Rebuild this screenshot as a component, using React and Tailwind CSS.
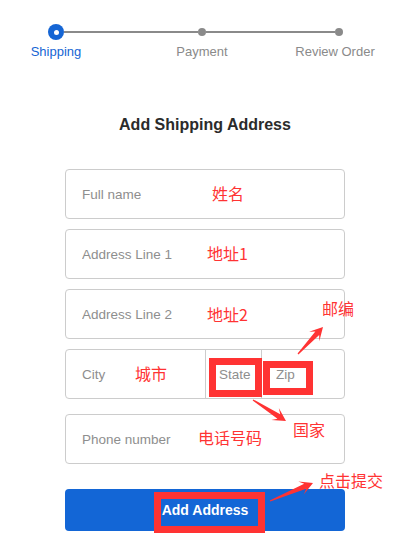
import { useState } from 'react'

const font = { fontFamily: '"Liberation Sans", Arial, sans-serif' }

function arrowPoints(x1, y1, x2, y2) {
  const len = Math.hypot(x2 - x1, y2 - y1)
  const dx = (x2 - x1) / len
  const dy = (y2 - y1) / len
  const nx = -dy
  const ny = dx
  const head = 13
  const neck = head * 0.65
  const nX = x2 - dx * neck
  const nY = y2 - dy * neck
  const bX = x2 - dx * head
  const bY = y2 - dy * head
  const pts = [
    [x1 + nx * 0.6, y1 + ny * 0.6],
    [nX + nx * 2.6, nY + ny * 2.6],
    [bX + nx * 7, bY + ny * 7],
    [x2, y2],
    [bX - nx * 7, bY - ny * 7],
    [nX - nx * 2.6, nY - ny * 2.6],
    [x1 - nx * 0.6, y1 - ny * 0.6],
  ]
  return pts.map((p) => p.join(',')).join(' ')
}

function Note({ left, top, children }) {
  return (
    <div
      className="absolute text-[16px] leading-none text-[#ff3333] whitespace-nowrap"
      style={{ left, top, fontFamily: '"Noto Sans CJK SC", "Liberation Sans", sans-serif' }}
    >
      {children}
    </div>
  )
}

export default function App() {
  const [form, setForm] = useState({ name: '', line1: '', line2: '', city: '', state: '', zip: '', phone: '' })
  const set = (k) => (e) => setForm({ ...form, [k]: e.target.value })

  const inputCls =
    'w-full h-full bg-transparent outline-none text-[13.5px] text-[#333] placeholder:text-[#8e8e8e]'

  return (
    <div className="relative w-[419px] h-[560px] bg-white overflow-hidden" style={font}>
      {/* Stepper */}
      <div className="pt-[24px]">
        <div className="ml-[48px] w-[295px] flex items-center">
          <div className="w-4 h-4 rounded-full bg-[#1565d4] flex items-center justify-center shrink-0">
            <div className="w-[5px] h-[5px] rounded-full bg-white" />
          </div>
          <div className="w-[134px] h-[2px] bg-[#8a8a8a]" />
          <div className="w-2 h-2 rounded-full bg-[#8a8a8a] shrink-0" />
          <div className="flex-1 h-[2px] bg-[#8a8a8a]" />
          <div className="w-2 h-2 rounded-full bg-[#8a8a8a] shrink-0" />
        </div>
        <div className="flex mt-[4px] text-[13px] leading-4">
          <div className="ml-[16px] w-[80px] text-center text-[#1565d4]">Shipping</div>
          <div className="ml-[66px] w-[80px] text-center text-[#8a8a8a]">Payment</div>
          <div className="ml-[48px] w-[90px] text-center text-[#8a8a8a]">Review Order</div>
        </div>
      </div>

      {/* Form */}
      <div className="ml-[65px] w-[280px]">
        <h1 className="mt-[55px] text-center text-[16px] leading-5 font-bold text-[#2b2b2b]">
          Add Shipping Address
        </h1>

        <div className="mt-[34px] flex flex-col gap-[10px]">
          <div className="h-[50px] border border-[#cccccc] rounded">
            <input className={inputCls + ' px-4'} placeholder="Full name" value={form.name} onChange={set('name')} />
          </div>
          <div className="h-[50px] border border-[#cccccc] rounded">
            <input className={inputCls + ' px-4'} placeholder="Address Line 1" value={form.line1} onChange={set('line1')} />
          </div>
          <div className="h-[50px] border border-[#cccccc] rounded">
            <input className={inputCls + ' px-4'} placeholder="Address Line 2" value={form.line2} onChange={set('line2')} />
          </div>
          <div className="h-[50px] border border-[#cccccc] rounded flex">
            <div className="w-[140px] border-r border-[#cccccc]">
              <input className={inputCls + ' px-4'} placeholder="City" value={form.city} onChange={set('city')} />
            </div>
            <div className="w-[56px] border-r border-[#cccccc]">
              <input className={inputCls + ' pl-[13px] pr-0'} placeholder="State" value={form.state} onChange={set('state')} />
            </div>
            <div className="flex-1">
              <input className={inputCls + ' pl-[14px] pr-2'} placeholder="Zip" value={form.zip} onChange={set('zip')} />
            </div>
          </div>
        </div>

        <div className="mt-[15px] h-[50px] border border-[#cccccc] rounded">
          <input className={inputCls + ' px-4'} placeholder="Phone number" value={form.phone} onChange={set('phone')} />
        </div>

        <button className="mt-[25px] w-full h-[42px] rounded bg-[#1366d6] text-white text-[14px] font-bold">
          Add Address
        </button>
      </div>

      {/* Annotations */}
      <Note left={212} top={185}>姓名</Note>
      <Note left={207} top={245}>地址1</Note>
      <Note left={207} top={306}>地址2</Note>
      <Note left={322} top={300}>邮编</Note>
      <Note left={135} top={365}>城市</Note>
      <Note left={293} top={421}>国家</Note>
      <Note left={198} top={429}>电话号码</Note>
      <Note left={319} top={472}>点击提交</Note>

      <div className="absolute left-[209px] top-[358px] w-[53px] h-[39px] border-[7px] border-[#ff3333]" />
      <div className="absolute left-[263px] top-[361px] w-[50px] h-[34px] border-[7px] border-[#ff3333]" />
      <div className="absolute left-[154px] top-[492px] w-[111px] h-[41px] border-[7px] border-[#ff3333]" />

      <svg className="absolute inset-0 pointer-events-none" width="419" height="560">
        <polygon points={arrowPoints(298, 354, 323, 327)} fill="#ff3333" />
        <polygon points={arrowPoints(253, 400, 286, 421)} fill="#ff3333" />
        <polygon points={arrowPoints(270, 501, 313, 483)} fill="#ff3333" />
      </svg>
    </div>
  )
}
